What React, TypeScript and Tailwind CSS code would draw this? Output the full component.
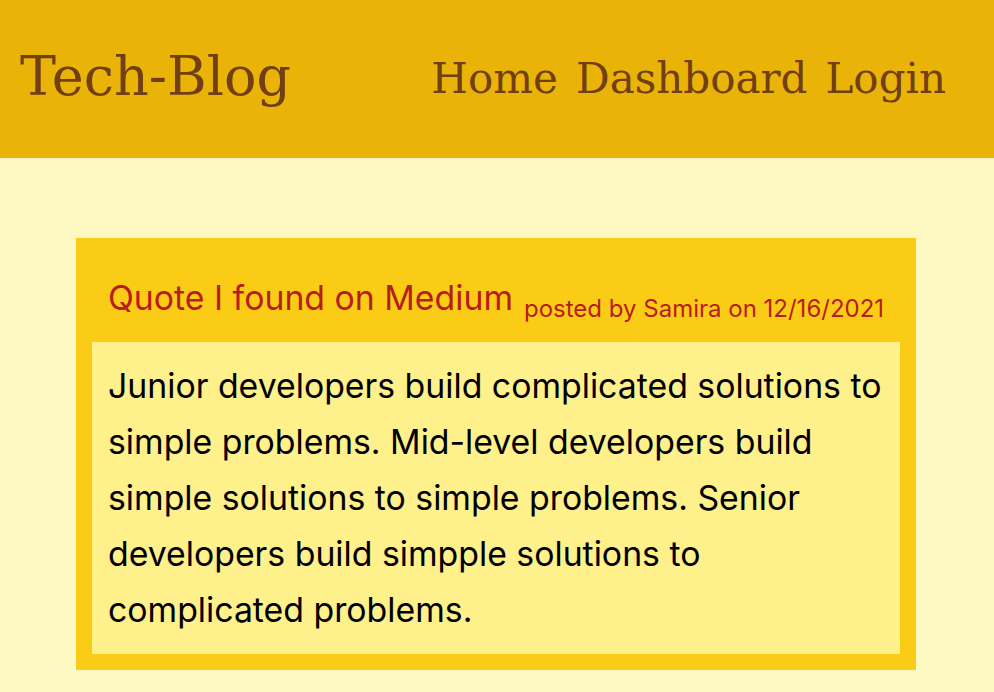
export default function App() {
  return (
    <div className="min-h-[692px] w-full bg-[#fef9c3]">
      <header className="flex h-[158px] items-center justify-between bg-[#eab308] pl-[20px] pr-[48px] text-[#713f12]" style={{ fontFamily: '"DejaVu Serif", Georgia, serif' }}>
        <h1 className="-mt-[4px] text-[54px] leading-none">Tech-Blog</h1>
        <nav className="flex gap-[18px] text-[42px] leading-none">
          <a>Home</a>
          <a>Dashboard</a>
          <a>Login</a>
        </nav>
      </header>
      <main className="pl-[76px] pr-[78px] pt-[80px] pb-[22px]" style={{ fontFamily: 'Inter, "Noto Sans", sans-serif' }}>
        <article className="bg-[#facc15] p-4">
          <div className="flex h-[88px] items-center pl-4 text-[#b91c1c]">
            <h2 className="text-[33.8px] leading-none">Quote I found on Medium</h2>
            <span className="ml-[11px] mt-[22px] text-[24px] leading-none">posted by Samira on 12/16/2021</span>
          </div>
          <div className="bg-[#fef08a] p-4 text-[33.8px] leading-[56px] text-black">
            Junior developers build complicated solutions to simple problems. Mid-level developers build simple solutions to simple problems. Senior developers build simpple solutions to complicated problems.
          </div>
        </article>
      </main>
    </div>
  );
}
